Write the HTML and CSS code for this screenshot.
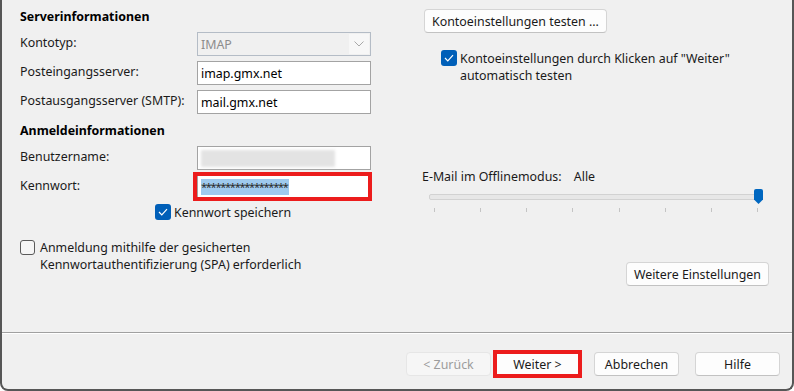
FILE: index.html
```html
<!DOCTYPE html>
<html>
<head>
    <title>Kontoeinstellungen</title>
    <link rel="stylesheet" href="styles.css">
</head>
<body>
    <div class="window">
        <div class="main">
            <div class="left">
                <h2>Serverinformationen</h2>
                <div class="row">
                    <span class="label">Kontotyp:</span>
                    <div class="combo disabled">
                        <span>IMAP</span>
                        <span class="arrow">
                            <svg width="10" height="6" viewBox="0 0 10 6"><path d="M0.5 0.5 L5 5 L9.5 0.5" fill="none" stroke="#a8a8a8" stroke-width="1"/></svg>
                        </span>
                    </div>
                </div>
                <div class="row">
                    <span class="label">Posteingangsserver:</span>
                    <div class="field">imap.gmx.net</div>
                </div>
                <div class="row">
                    <span class="label">Postausgangsserver (SMTP):</span>
                    <div class="field">mail.gmx.net</div>
                </div>

                <h2 class="second">Anmeldeinformationen</h2>
                <div class="row">
                    <span class="label">Benutzername:</span>
                    <div class="field"><span class="blurred"></span></div>
                </div>
                <div class="row">
                    <span class="label">Kennwort:</span>
                    <div class="field marked"><span class="selected">******************</span></div>
                </div>
                <label class="checkline save">
                    <span class="check on">
                        <svg width="10" height="8" viewBox="0 0 10 8"><path d="M1 4 L3.8 6.8 L9 1.2" fill="none" stroke="#fff" stroke-width="1.2"/></svg>
                    </span>
                    Kennwort speichern
                </label>
                <label class="checkline spa">
                    <span class="check off"></span>
                    <span>Anmeldung mithilfe der gesicherten<br>Kennwortauthentifizierung (SPA) erforderlich</span>
                </label>
            </div>

            <div class="right">
                <div><button class="btn">Kontoeinstellungen testen ...</button></div>
                <label class="checkline auto">
                    <span class="check on">
                        <svg width="10" height="8" viewBox="0 0 10 8"><path d="M1 4 L3.8 6.8 L9 1.2" fill="none" stroke="#fff" stroke-width="1.2"/></svg>
                    </span>
                    <span>Kontoeinstellungen durch Klicken auf "Weiter"<br>automatisch testen</span>
                </label>
                <div class="offline">
                    <span>E-Mail im Offlinemodus:</span>
                    <span class="value">Alle</span>
                </div>
                <div class="slider">
                    <div class="track"></div>
                    <svg class="thumb" width="9" height="15" viewBox="0 0 9 15"><path d="M2 0 H7 Q9 0 9 2 V10.5 L4.5 15 L0 10.5 V2 Q0 0 2 0 Z" fill="#0067c0"/></svg>
                    <div class="ticks">
                        <i></i><i></i><i></i><i></i><i></i><i></i><i></i><i></i>
                    </div>
                </div>
                <div class="more">
                    <button class="btn">Weitere Einstellungen</button>
                </div>
            </div>
        </div>

        <div class="separator"></div>

        <div class="footer">
            <button class="btn wide" disabled>&lt; Zurück</button>
            <button class="btn wide marked">Weiter &gt;</button>
            <button class="btn wide gap">Abbrechen</button>
            <button class="btn wide gap">Hilfe</button>
        </div>
    </div>
</body>
</html>
```

FILE: styles.css
```css
body {
    margin: 0;
    background-color: #fff;
    font-family: "Noto Sans", "Open Sans", sans-serif;
    font-size: 12.4px;
    color: #1a1a1a;
}
.window {
    width: 794px;
    height: 391px;
    box-sizing: border-box;
    background-color: #f0f0f0;
    border: 2px solid #565656;
    border-top: none;
    border-radius: 0 0 8px 8px;
    display: flex;
    flex-direction: column;
}
.main {
    height: 332px;
    display: flex;
}
.left {
    margin-left: 18px;
    width: 353px;
    padding-top: 9px;
}
h2 {
    margin: 0 0 7px 0;
    font-size: 12.4px;
    font-weight: bold;
    line-height: 16px;
    color: #000;
}
h2.second {
    margin-top: 9px;
}
.row {
    display: flex;
    align-items: center;
    height: 24px;
    margin-bottom: 5px;
    white-space: nowrap;
}
.label {
    width: 177px;
    padding-bottom: 3px;
}
.field, .combo {
    box-sizing: border-box;
    width: 174px;
    height: 24px;
    border: 1px solid #a3a3a3;
    background-color: #fff;
    padding: 0 3px;
    display: flex;
    align-items: center;
    color: #000;
}
.combo.disabled {
    background-color: #f0f0f0;
    border-color: #b4bcc6;
    color: #8d8d8d;
    justify-content: space-between;
    padding-right: 1px;
}
.arrow {
    width: 20px;
    height: 20px;
    background-color: #f7f7f7;
    display: flex;
    align-items: center;
    justify-content: center;
}
.blurred {
    width: 134px;
    height: 17px;
    background-color: #e3e3e3;
    filter: blur(1.5px);
}
.selected {
    background-color: #9fcaee;
    color: #2a2a2a;
    letter-spacing: -1.25px;
    line-height: 16px;
    font-size: 11px;
    padding-right: 1px;
}
.marked {
    position: relative;
}
.marked::after {
    content: "";
    position: absolute;
    left: -5px;
    top: -4px;
    right: -2px;
    bottom: -3px;
    border: 4px solid #ec1c1c;
}
.checkline {
    display: flex;
    align-items: flex-start;
    line-height: 17px;
    white-space: nowrap;
}
.check {
    box-sizing: border-box;
    width: 16px;
    height: 16px;
    border-radius: 3px;
    margin-right: 3px;
    flex-shrink: 0;
    display: flex;
    align-items: center;
    justify-content: center;
}
.check.on {
    background-color: #005fb8;
}
.check.off {
    width: 15px;
    height: 15px;
    border: 1px solid #5a5a5a;
    background-color: #f5f5f5;
    margin-right: 5px;
    margin-top: 1px;
}
.save {
    margin-top: 0;
    margin-left: 135px;
}
.spa {
    margin-top: 18px;
    margin-left: 0;
}
.right {
    margin-left: 51px;
    width: 346px;
    padding-top: 9px;
    display: flex;
    flex-direction: column;
}
.btn {
    font-family: inherit;
    font-size: 12.4px;
    color: #1a1a1a;
    height: 24px;
    padding: 0 7px;
    background-color: #fdfdfd;
    border: 1px solid #d5d5d5;
    border-bottom-color: #c2c2c2;
    border-radius: 4px;
}
.btn:disabled {
    background-color: #f6f6f6;
    border-color: #e6e6e6;
    color: #9c9c9c;
}
.auto {
    margin-top: 17px;
    margin-left: 17px;
}
.offline {
    margin-top: 84px;
    margin-left: -2px;
    line-height: 17px;
}
.offline .value {
    margin-left: 9px;
}
.slider {
    position: relative;
    width: 333px;
    margin-left: 5px;
    margin-top: 4px;
    height: 24px;
}
.track {
    margin-top: 5px;
    height: 6px;
    box-sizing: border-box;
    border: 1px solid #d2d2d2;
    background-color: #e7e7e7;
    border-radius: 2px;
}
.thumb {
    position: absolute;
    right: -1px;
    top: 0;
}
.ticks {
    display: flex;
    justify-content: space-between;
    padding: 0 4px 0 5px;
    margin-top: 8px;
}
.ticks i {
    width: 1px;
    height: 4px;
    background-color: #c4c4c4;
}
.more {
    margin-top: 49px;
    display: flex;
    justify-content: flex-end;
    padding-right: 1px;
}
.separator {
    height: 1px;
    background-color: #a0a0a0;
    border-bottom: 1px solid #fff;
}
.footer {
    display: flex;
    justify-content: flex-end;
    padding: 18px 12px 0 0;
}
.wide {
    width: 85px;
    padding: 0;
}
.footer .marked {
    margin-left: 4px;
}
.footer .marked::after {
    left: -3px;
    top: -3px;
    right: -3px;
    bottom: -3px;
}
.gap {
    margin-left: 14px;
}
.gap + .gap {
    margin-left: 16px;
}
```
